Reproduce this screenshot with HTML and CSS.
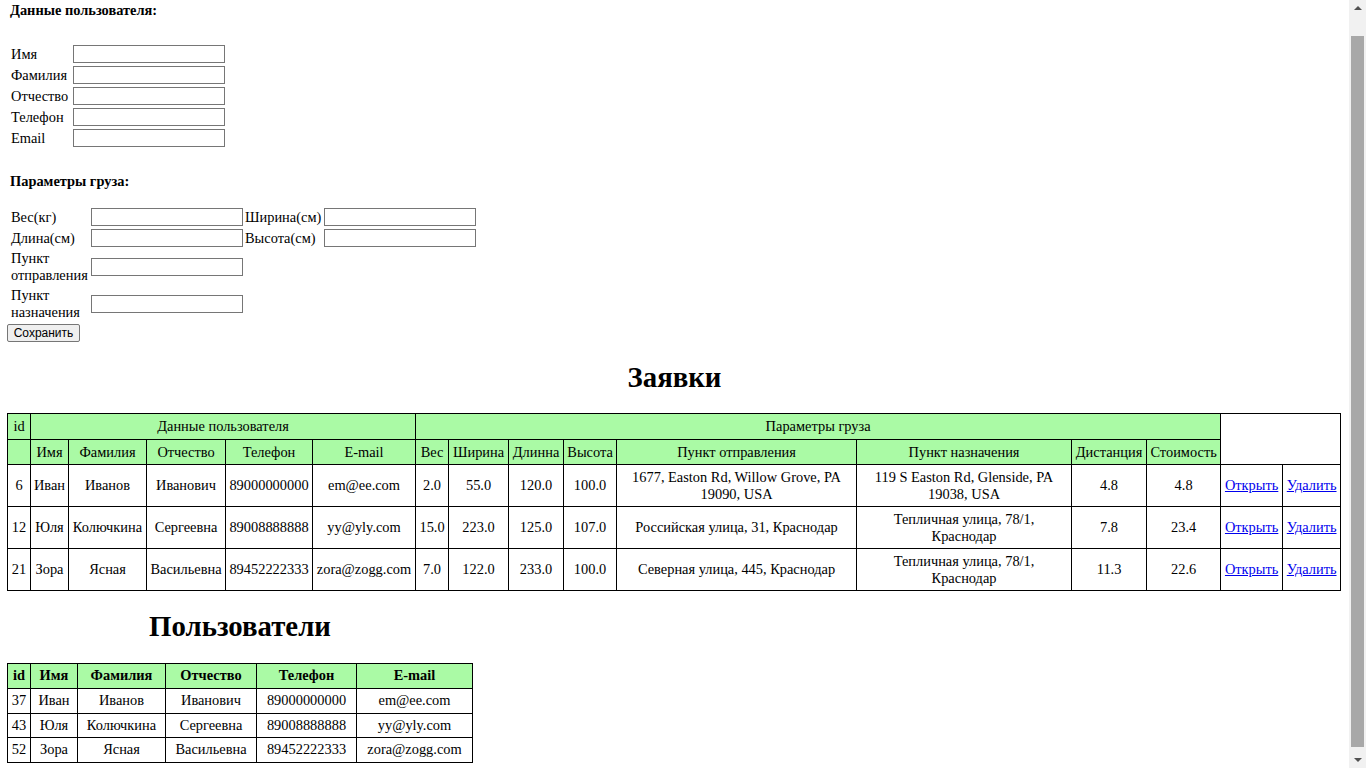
FILE: index.html
```html
<!DOCTYPE html>
<html lang="ru">
<head>
<meta charset="utf-8">
<title>Заявки</title>
<link rel="stylesheet" href="styles.css">
</head>
<body>
<form class="order-form">
  <h4 class="section-title">Данные пользователя:</h4>
  <div class="user-grid">
    <label class="field-label">Имя</label><input class="field" type="text">
    <label class="field-label">Фамилия</label><input class="field" type="text">
    <label class="field-label">Отчество</label><input class="field" type="text">
    <label class="field-label">Телефон</label><input class="field" type="text">
    <label class="field-label">Email</label><input class="field" type="text">
  </div>
  <h4 class="section-title second">Параметры груза:</h4>
  <div class="cargo-grid">
    <label class="field-label">Вес(кг)</label><input class="field" type="text">
    <label class="field-label right">Ширина(см)</label><input class="field" type="text">
    <label class="field-label">Длина(см)</label><input class="field" type="text">
    <label class="field-label right">Высота(см)</label><input class="field" type="text">
    <label class="field-label">Пункт<br>отправления</label><input class="field" type="text">
    <span></span><span></span>
    <label class="field-label">Пункт<br>назначения</label><input class="field" type="text">
    <span></span><span></span>
  </div>
  <button class="save-btn" type="button">Сохранить</button>
</form>

<section class="orders">
  <h1 class="table-title">Заявки</h1>
  <table class="grid-table orders-table">
    <colgroup>
      <col style="width:23px"><col style="width:38px"><col style="width:78px"><col style="width:79px"><col style="width:87px"><col style="width:103px">
      <col style="width:33px"><col style="width:60px"><col style="width:55px"><col style="width:53px"><col style="width:240px"><col style="width:215px">
      <col style="width:75px"><col style="width:74px"><col style="width:62px"><col style="width:58px">
    </colgroup>
    <tr class="head">
      <td>id</td>
      <td colspan="5">Данные пользователя</td>
      <td colspan="8">Параметры груза</td>
      <td class="blank" colspan="2" rowspan="2"></td>
    </tr>
    <tr class="head">
      <td></td>
      <td>Имя</td><td>Фамилия</td><td>Отчество</td><td>Телефон</td><td>E-mail</td>
      <td>Вес</td><td>Ширина</td><td>Длинна</td><td>Высота</td><td>Пункт отправления</td><td>Пункт назначения</td><td>Дистанция</td><td>Стоимость</td>
    </tr>
    <tr>
      <td>6</td><td>Иван</td><td>Иванов</td><td>Иванович</td><td>89000000000</td><td>em@ee.com</td>
      <td>2.0</td><td>55.0</td><td>120.0</td><td>100.0</td><td>1677, Easton Rd, Willow Grove, PA 19090, USA</td><td class="addr">119 S Easton Rd, Glenside, PA 19038, USA</td><td>4.8</td><td>4.8</td>
      <td><a href="#">Открыть</a></td><td><a href="#">Удалить</a></td>
    </tr>
    <tr>
      <td>12</td><td>Юля</td><td>Колючкина</td><td>Сергеевна</td><td>89008888888</td><td>yy@yly.com</td>
      <td>15.0</td><td>223.0</td><td>125.0</td><td>107.0</td><td>Российская улица, 31, Краснодар</td><td class="addr">Тепличная улица, 78/1, Краснодар</td><td>7.8</td><td>23.4</td>
      <td><a href="#">Открыть</a></td><td><a href="#">Удалить</a></td>
    </tr>
    <tr>
      <td>21</td><td>Зора</td><td>Ясная</td><td>Васильевна</td><td>89452222333</td><td>zora@zogg.com</td>
      <td>7.0</td><td>122.0</td><td>233.0</td><td>100.0</td><td>Северная улица, 445, Краснодар</td><td class="addr">Тепличная улица, 78/1, Краснодар</td><td>11.3</td><td>22.6</td>
      <td><a href="#">Открыть</a></td><td><a href="#">Удалить</a></td>
    </tr>
  </table>
</section>

<section class="users">
  <h1 class="table-title users-title">Пользователи</h1>
  <table class="grid-table users-table">
    <colgroup>
      <col style="width:23px"><col style="width:47px"><col style="width:88px"><col style="width:91px"><col style="width:100px"><col style="width:116px">
    </colgroup>
    <tr class="head">
      <th>id</th><th>Имя</th><th>Фамилия</th><th>Отчество</th><th>Телефон</th><th>E-mail</th>
    </tr>
    <tr><td>37</td><td>Иван</td><td>Иванов</td><td>Иванович</td><td>89000000000</td><td>em@ee.com</td></tr>
    <tr><td>43</td><td>Юля</td><td>Колючкина</td><td>Сергеевна</td><td>89008888888</td><td>yy@yly.com</td></tr>
    <tr><td>52</td><td>Зора</td><td>Ясная</td><td>Васильевна</td><td>89452222333</td><td>zora@zogg.com</td></tr>
  </table>
</section>

<div class="scrollbar" aria-hidden="true">
  <div class="scroll-arrow up"></div>
  <div class="scroll-track"><div class="scroll-thumb"></div></div>
  <div class="scroll-arrow down"></div>
</div>
</body>
</html>
```

FILE: styles.css
```css
html, body {
  background: #ffffff;
}
body {
  margin: 0 24px 8px 7px;
  font-family: "Liberation Serif", "Times New Roman", serif;
  font-size: 14.4px;
  color: #000000;
}

.order-form {
  margin: 0;
}
.section-title {
  margin: 1px 0 0 0;
  padding-left: 3px;
  font-size: 14.4px;
  font-weight: bold;
  line-height: 18px;
}
.section-title.second {
  margin-top: 25px;
}

.user-grid {
  margin-top: 26px;
  padding-left: 4px;
  display: grid;
  grid-template-columns: 62px 152px;
  grid-auto-rows: 18px;
  row-gap: 3px;
  align-items: center;
}
.cargo-grid {
  margin-top: 18px;
  padding-left: 4px;
  display: grid;
  grid-template-columns: 80px 152px 81px 152px;
  row-gap: 3px;
  align-items: center;
}
.field-label {
  line-height: 17px;
  white-space: nowrap;
}
.field-label.right {
  padding-left: 2px;
}
.field {
  box-sizing: border-box;
  width: 152px;
  height: 18px;
  margin: 0;
  padding: 0 2px;
  border: 1px solid #767676;
  background: #ffffff;
  font-family: "Liberation Sans", Arial, sans-serif;
  font-size: 12px;
}

.save-btn {
  display: block;
  box-sizing: border-box;
  margin: 3px 0 0 0;
  width: 73px;
  height: 18px;
  padding: 0;
  border: 1px solid #767676;
  border-radius: 2px;
  background: #efefef;
  font-family: "Liberation Sans", Arial, sans-serif;
  font-size: 12px;
  line-height: 16px;
  color: #000000;
}

.table-title {
  margin: 17px 0 18px 0;
  font-size: 28.8px;
  font-weight: bold;
  line-height: 36px;
  text-align: center;
}
.users {
  width: max-content;
}
.users-title {
  margin: 17px 0 19px 0;
}

.grid-table {
  border-collapse: collapse;
  table-layout: fixed;
  font-size: 14.4px;
  line-height: 15.75px;
}
.orders-table {
  width: 1334px;
  line-height: 16.5px;
}
.users-table {
  width: 466px;
}
.grid-table td,
.grid-table th {
  border: 1px solid #000000;
  padding: 4px 2px;
  text-align: center;
  vertical-align: middle;
  overflow: hidden;
}
.grid-table td.addr {
  padding-left: 4px;
  padding-right: 4px;
}
.grid-table th {
  font-weight: bold;
}
.grid-table .head td,
.grid-table .head th {
  background: #aafaa5;
}
.grid-table .head td.blank {
  background: #ffffff;
}
.grid-table a {
  color: #0000ee;
  text-decoration: underline;
}

/* painted browser scrollbar (page is taller than the window) */
.scrollbar {
  position: fixed;
  top: 0;
  right: 0;
  width: 17px;
  height: 100vh;
  display: flex;
  flex-direction: column;
  background: #f1f1f1;
}
.scroll-arrow {
  height: 17px;
  flex: none;
  position: relative;
}
.scroll-arrow::after {
  content: "";
  position: absolute;
  left: 5px;
  width: 0;
  height: 0;
  border-left: 4px solid transparent;
  border-right: 4px solid transparent;
}
.scroll-arrow.up::after {
  top: 6px;
  border-bottom: 4px solid #505050;
}
.scroll-arrow.down::after {
  top: 7px;
  border-top: 4px solid #505050;
}
.scroll-track {
  flex: 1;
  display: flex;
  flex-direction: column;
  padding: 19px 2px 4px 2px;
}
.scroll-thumb {
  flex: 1;
  background: #a8a8a8;
}
```
